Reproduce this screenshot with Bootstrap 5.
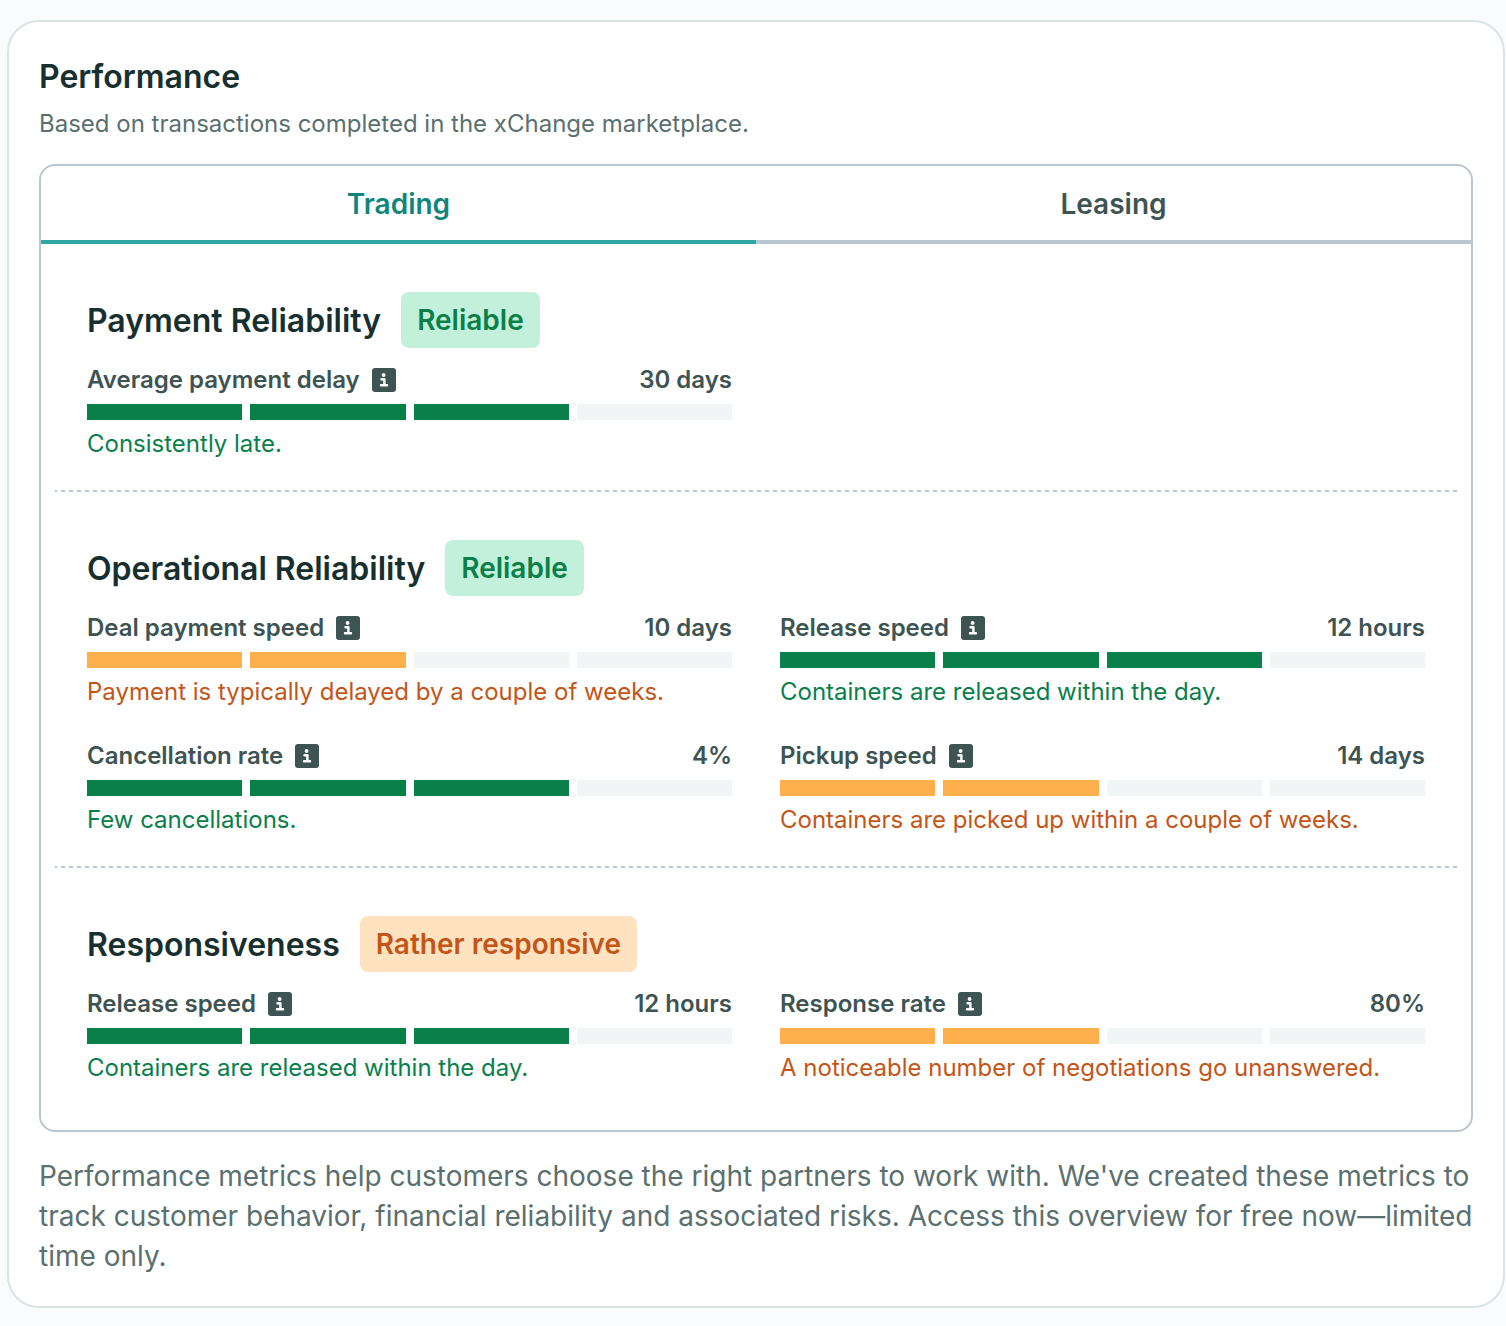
<!DOCTYPE html>
<html lang="en">
<head>
<meta charset="utf-8">
<meta name="viewport" content="width=device-width, initial-scale=1">
<title>Performance</title>
<link href="https://cdn.jsdelivr.net/npm/bootstrap@5.3.0/dist/css/bootstrap.min.css" rel="stylesheet">
<style>
  body { background: #fafbfd; color: #5a706f; font-family: Inter, "Liberation Sans", sans-serif; font-size: 24px; line-height: 32px; }
  .perf-card { margin: 20px 1px 18px 7px; padding: 30px; background: #fff; border: 2px solid #dae4e5; border-radius: 32px; }
  .perf-title, .group-title { margin: 0; padding-top: 2px; color: #17302f; font-size: 32px; line-height: 46px; font-weight: 600; }
  .perf-panel { border: 2px solid #b8c8ce; border-radius: 16px; }
  .perf-tabs .nav-link { padding: 18px 16px 16px; border: 0; border-bottom: 4px solid #b8c8ce; border-radius: 0; background: none; color: #3d5453; font-size: 28px; line-height: 40px; font-weight: 600; }
  .perf-tabs .nav-link.active { color: #10857c; border-color: #2fa8a3; background: none; }
  .group { margin: 0 14px; padding: 48px 32px 30px; }
  .group + .group { background: linear-gradient(90deg, #b8c8ce 4px, transparent 4px) -2px 0 / 8px 2px repeat-x; padding-top: 50px; }
  .group:last-child { padding-bottom: 46px; }
  .group-head { gap: 20px; margin-bottom: 16px; }
  .rating { padding: 8px 16px; border-radius: 8px; font-size: 28px; line-height: 40px; font-weight: 600; }
  .rating-good { background: #c2f0da; color: #09804a; }
  .rating-fair { background: #ffe3c0; color: #c45518; }
  .metrics { --bs-gutter-x: 48px; --bs-gutter-y: 32px; }
  .metric-label { color: #3d5453; font-weight: 600; }
  .info-btn { width: 24px; height: 24px; margin-left: 12px; padding: 0; border: 0; background: none; line-height: 0; }
  .meter { gap: 8px; margin: 8px 0; }
  .meter span { flex: 1 1 0; height: 16px; background: #f1f5f6; }
  .good .on { background: #09804a; }
  .fair .on { background: #ffb04c; }
  .good .note { color: #09804a; }
  .fair .note { color: #c45518; }
  .perf-foot { font-size: 28px; line-height: 40px; }
</style>
<script src="https://cdn.jsdelivr.net/npm/bootstrap@5.3.0/dist/js/bootstrap.bundle.min.js" defer></script>
</head>
<body>
<svg class="d-none" aria-hidden="true">
  <symbol id="info" viewBox="0 0 24 24">
    <rect width="24" height="24" rx="3" fill="#3d5453"/>
    <circle cx="11.6" cy="7" r="1.9" fill="#fff"/>
    <path d="M9.5 11.2H12.4V17.2M9 17.3H15" fill="none" stroke="#fff" stroke-width="2.4" stroke-linecap="round" stroke-linejoin="round"/>
  </symbol>
</svg>
<main class="perf-card">
  <h1 class="perf-title">Performance</h1>
  <p class="mt-2 mb-4">Based on transactions completed in the xChange marketplace.</p>

  <div class="perf-panel">
    <div class="nav nav-justified perf-tabs" role="tablist">
      <button class="nav-link active" type="button" role="tab" aria-selected="true" aria-controls="trading" id="tab-trading">Trading</button>
      <button class="nav-link" type="button" role="tab" aria-selected="false" id="tab-leasing">Leasing</button>
    </div>

    <div id="trading" role="tabpanel" aria-labelledby="tab-trading">
      <section class="group">
        <div class="group-head d-flex align-items-center">
          <h2 class="group-title">Payment Reliability</h2>
          <span class="rating rating-good">Reliable</span>
        </div>
        <div class="row metrics">
          <div class="col-6 good">
            <div class="metric-label d-flex align-items-center"><span>Average payment delay</span><button class="info-btn" type="button" aria-label="About average payment delay"><svg width="24" height="24"><use href="#info"/></svg></button><span class="ms-auto">30 days</span></div>
            <div class="meter d-flex"><span class="on"></span><span class="on"></span><span class="on"></span><span></span></div>
            <div class="note">Consistently late.</div>
          </div>
        </div>
      </section>

      <section class="group">
        <div class="group-head d-flex align-items-center">
          <h2 class="group-title">Operational Reliability</h2>
          <span class="rating rating-good">Reliable</span>
        </div>
        <div class="row metrics">
          <div class="col-6 fair">
            <div class="metric-label d-flex align-items-center"><span>Deal payment speed</span><button class="info-btn" type="button" aria-label="About deal payment speed"><svg width="24" height="24"><use href="#info"/></svg></button><span class="ms-auto">10 days</span></div>
            <div class="meter d-flex"><span class="on"></span><span class="on"></span><span></span><span></span></div>
            <div class="note">Payment is typically delayed by a couple of weeks.</div>
          </div>
          <div class="col-6 good">
            <div class="metric-label d-flex align-items-center"><span>Release speed</span><button class="info-btn" type="button" aria-label="About release speed"><svg width="24" height="24"><use href="#info"/></svg></button><span class="ms-auto">12 hours</span></div>
            <div class="meter d-flex"><span class="on"></span><span class="on"></span><span class="on"></span><span></span></div>
            <div class="note">Containers are released within the day.</div>
          </div>
          <div class="col-6 good">
            <div class="metric-label d-flex align-items-center"><span>Cancellation rate</span><button class="info-btn" type="button" aria-label="About cancellation rate"><svg width="24" height="24"><use href="#info"/></svg></button><span class="ms-auto">4%</span></div>
            <div class="meter d-flex"><span class="on"></span><span class="on"></span><span class="on"></span><span></span></div>
            <div class="note">Few cancellations.</div>
          </div>
          <div class="col-6 fair">
            <div class="metric-label d-flex align-items-center"><span>Pickup speed</span><button class="info-btn" type="button" aria-label="About pickup speed"><svg width="24" height="24"><use href="#info"/></svg></button><span class="ms-auto">14 days</span></div>
            <div class="meter d-flex"><span class="on"></span><span class="on"></span><span></span><span></span></div>
            <div class="note">Containers are picked up within a couple of weeks.</div>
          </div>
        </div>
      </section>

      <section class="group">
        <div class="group-head d-flex align-items-center">
          <h2 class="group-title">Responsiveness</h2>
          <span class="rating rating-fair">Rather responsive</span>
        </div>
        <div class="row metrics">
          <div class="col-6 good">
            <div class="metric-label d-flex align-items-center"><span>Release speed</span><button class="info-btn" type="button" aria-label="About release speed"><svg width="24" height="24"><use href="#info"/></svg></button><span class="ms-auto">12 hours</span></div>
            <div class="meter d-flex"><span class="on"></span><span class="on"></span><span class="on"></span><span></span></div>
            <div class="note">Containers are released within the day.</div>
          </div>
          <div class="col-6 fair">
            <div class="metric-label d-flex align-items-center"><span>Response rate</span><button class="info-btn" type="button" aria-label="About response rate"><svg width="24" height="24"><use href="#info"/></svg></button><span class="ms-auto">80%</span></div>
            <div class="meter d-flex"><span class="on"></span><span class="on"></span><span></span><span></span></div>
            <div class="note">A noticeable number of negotiations go unanswered.</div>
          </div>
        </div>
      </section>
    </div>
  </div>

  <p class="perf-foot mt-4 mb-0">Performance metrics help customers choose the right partners to work with. We've created these metrics to track customer behavior, financial reliability and associated risks. Access this overview for free now—limited time only.</p>
</main>
</body>
</html>
